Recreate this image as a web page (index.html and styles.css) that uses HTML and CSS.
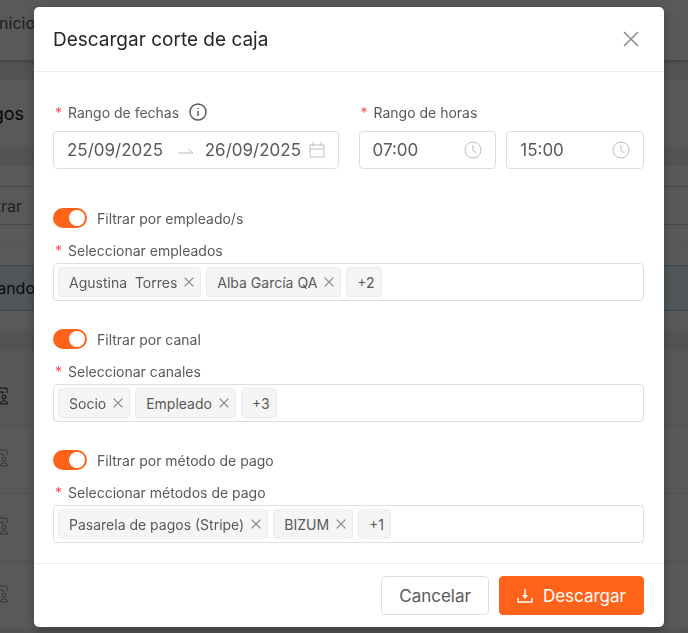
FILE: index.html
```html
<!DOCTYPE html>
<html lang="es">
<head>
  <meta charset="UTF-8">
  <meta name="viewport" content="width=device-width, initial-scale=1.0">
  <title>Descargar corte de caja</title>
  <link rel="stylesheet" href="styles.css">
</head>
<body>
  <svg class="sprite" aria-hidden="true">
    <symbol id="icon-x" viewBox="0 0 16 16"><path d="M1 1l14 14M15 1L1 15"/></symbol>
    <symbol id="icon-clock" viewBox="0 0 18 18"><circle cx="9" cy="9" r="8"/><path d="M9 4v5.500l3.500 2.500"/></symbol>
    <symbol id="icon-user" viewBox="0 0 18 18"><path d="M7 17H1V1h15v5M5 5h7v2"/><circle cx="13" cy="10" r="2"/><path d="M9.500 17v-1.500l2-1.500h3l2 1.500V17z"/></symbol>
  </svg>

  <div class="page" aria-hidden="true">
    <div class="nav"><span class="peek">nicio</span></div>
    <div class="page-title"><span class="peek">gos</span></div>
    <div class="panel">
      <div class="panel-top"></div>
      <div class="panel-filter"><span class="peek">trar</span></div>
      <div class="panel-space"></div>
      <div class="panel-space"></div>
      <div class="notice"><span class="peek">ando</span></div>
      <div class="panel-space"></div>
    </div>
    <div class="rows">
      <div class="row row-head"><svg class="row-icon"><use href="#icon-user"/></svg></div>
      <div class="row"><svg class="row-icon"><use href="#icon-user"/></svg></div>
      <div class="row"><svg class="row-icon"><use href="#icon-user"/></svg></div>
      <div class="row"><svg class="row-icon"><use href="#icon-user"/></svg></div>
    </div>
  </div>

  <div class="overlay">
    <form class="modal" role="dialog" aria-labelledby="titulo">
      <div class="modal-header">
        <h1 id="titulo">Descargar corte de caja</h1>
        <button type="button" class="close" aria-label="Cerrar"><svg class="icon"><use href="#icon-x"/></svg></button>
      </div>

      <div class="modal-body">
        <div class="ranges">
          <div class="field">
            <div class="label-row">
              <label class="label" for="fechaInicio">Rango de fechas</label>
              <svg class="info" viewBox="0 0 18 18"><circle cx="9" cy="9" r="8"/><path d="M9 8v5M9 5v1"/></svg>
            </div>
            <div class="box">
              <input type="text" id="fechaInicio" class="date" value="25/09/2025">
              <svg class="arrow" viewBox="0 0 16 10"><path d="M0 8h15l-5-4"/></svg>
              <input type="text" class="date" value="26/09/2025" aria-label="Fecha de fin">
              <svg class="calendar" viewBox="0 0 16 16"><path d="M1 3h14v12H1zM1 7h14M4 0v4M12 0v4"/></svg>
            </div>
          </div>
          <div class="field">
            <div class="label-row">
              <label class="label" for="horaInicio">Rango de horas</label>
            </div>
            <div class="times">
              <div class="box">
                <input type="text" id="horaInicio" value="07:00">
                <svg class="clock"><use href="#icon-clock"/></svg>
              </div>
              <div class="box">
                <input type="text" value="15:00" aria-label="Hora de fin">
                <svg class="clock"><use href="#icon-clock"/></svg>
              </div>
            </div>
          </div>
        </div>

        <div class="filter">
          <div class="switch-row">
            <input type="checkbox" role="switch" id="porEmpleado" class="switch" checked>
            <label for="porEmpleado">Filtrar por empleado/s</label>
          </div>
          <label class="label" for="empleados">Seleccionar empleados</label>
          <div class="select">
            <span class="tag">Agustina&nbsp; Torres<button type="button" aria-label="Quitar Agustina Torres"><svg class="icon"><use href="#icon-x"/></svg></button></span>
            <span class="tag">Alba García QA<button type="button" aria-label="Quitar Alba García QA"><svg class="icon"><use href="#icon-x"/></svg></button></span>
            <span class="tag">+2</span>
            <input type="text" id="empleados">
          </div>
        </div>

        <div class="filter">
          <div class="switch-row">
            <input type="checkbox" role="switch" id="porCanal" class="switch" checked>
            <label for="porCanal">Filtrar por canal</label>
          </div>
          <label class="label" for="canales">Seleccionar canales</label>
          <div class="select">
            <span class="tag">Socio<button type="button" aria-label="Quitar Socio"><svg class="icon"><use href="#icon-x"/></svg></button></span>
            <span class="tag">Empleado<button type="button" aria-label="Quitar Empleado"><svg class="icon"><use href="#icon-x"/></svg></button></span>
            <span class="tag">+3</span>
            <input type="text" id="canales">
          </div>
        </div>

        <div class="filter">
          <div class="switch-row">
            <input type="checkbox" role="switch" id="porMetodo" class="switch" checked>
            <label for="porMetodo">Filtrar por método de pago</label>
          </div>
          <label class="label" for="metodos">Seleccionar métodos de pago</label>
          <div class="select">
            <span class="tag">Pasarela de pagos (Stripe)<button type="button" aria-label="Quitar Pasarela de pagos"><svg class="icon"><use href="#icon-x"/></svg></button></span>
            <span class="tag">BIZUM<button type="button" aria-label="Quitar BIZUM"><svg class="icon"><use href="#icon-x"/></svg></button></span>
            <span class="tag">+1</span>
            <input type="text" id="metodos">
          </div>
        </div>
      </div>

      <div class="modal-footer">
        <button type="button" class="btn">Cancelar</button>
        <button type="submit" class="btn btn-primary">
          <svg class="download" viewBox="0 0 16 16"><path d="M1 10v4h14v-4M8 1v7"/><path class="head" d="M5 7h6l-3 4z"/></svg>
          Descargar
        </button>
      </div>
    </form>
  </div>
</body>
</html>
```

FILE: styles.css
```css
* {
  box-sizing: border-box;
}

body {
  margin: 0;
  font-family: Inter, Roboto, sans-serif;
  font-size: 14px;
  color: #595959;
}

.sprite {
  display: none;
}

svg {
  fill: none;
  stroke: currentColor;
  flex: none;
}

/* Página de fondo */
.page {
  position: fixed;
  inset: 0;
  overflow: hidden;
  background: #eee;
}

.page > div {
  background: #fff;
}

.nav,
.page-title,
.panel-filter,
.notice {
  display: flex;
  align-items: center;
}

.peek {
  display: flex;
  justify-content: flex-end;
  width: 35px;
  font-size: 16px;
}

.page > .nav {
  height: 61px;
  padding-bottom: 14px;
  border-bottom: 1px solid #ccc;
  box-shadow: 0 1px 3px #bbb;
  margin-bottom: 19px;
}

.page-title {
  height: 67px;
  margin-bottom: 19px;
  color: #111;
}

.page-title .peek {
  width: 24px;
  font-size: 18px;
}

.panel {
  margin-bottom: 19px;
}

.panel-top,
.panel-space {
  height: 20px;
}

.panel-filter {
  height: 39px;
  border-top: 1px solid #ccc;
  border-bottom: 1px solid #ccc;
}

.panel-filter .peek {
  width: 22px;
}

.panel-space + .panel-space {
  border-top: 1px solid #eee;
}

.notice {
  height: 46px;
  background: #e6f7ff;
  border-top: 1px solid #91d5ff;
  border-bottom: 1px solid #91d5ff;
  color: #222;
}

.row {
  display: flex;
  align-items: center;
  height: 68px;
  padding-bottom: 4px;
  border-bottom: 1px solid #e4e4e4;
  color: #999;
}

.row-head {
  height: 76px;
  padding: 16px 0 0;
  background: #fafafa;
  color: #222;
}

.row-icon {
  width: 18px;
  height: 18px;
  margin-left: -9px;
}

/* Modal */
.overlay {
  position: relative;
  min-height: 100vh;
  padding: 7px 24px 7px 34px;
  background: rgba(0, 0, 0, 0.65);
}

.modal {
  background: #fff;
  border-radius: 5px;
  box-shadow: 0 4px 12px rgba(0, 0, 0, 0.3);
}

.modal-header {
  display: flex;
  justify-content: space-between;
  align-items: center;
  height: 65px;
  padding: 0 25px 0 19px;
  border-bottom: 1px solid #ececec;
}

h1 {
  margin: 0;
  font-size: 19px;
  font-weight: 400;
  color: #262626;
}

button {
  font-family: inherit;
  cursor: pointer;
}

.close,
.tag button {
  display: flex;
  padding: 0;
  border: none;
  background: none;
  color: #888;
}

.close .icon {
  width: 16px;
  height: 16px;
  stroke-width: 1.5;
}

.modal-body {
  display: flex;
  flex-direction: column;
  gap: 28px;
  padding: 27px 20px 20px 19px;
}

.ranges {
  display: grid;
  grid-template-columns: 1fr 1fr;
  gap: 20px;
  margin-bottom: 11px;
}

.label-row {
  display: flex;
  align-items: center;
  gap: 10px;
  height: 26px;
  margin-bottom: 6px;
}

.label {
  display: block;
  line-height: 25px;
}

.label::before {
  content: "*";
  display: inline-block;
  width: 13px;
  padding-left: 2px;
  color: #ff4d4f;
}

.info,
.clock {
  width: 18px;
  height: 18px;
}

.info {
  stroke-width: 1.5;
}

.times {
  display: grid;
  grid-template-columns: 1fr 1fr;
  gap: 10px;
}

.box,
.select {
  display: flex;
  align-items: center;
  height: 38px;
  border: 1px solid #dedede;
  border-radius: 4px;
}

.box {
  padding: 0 13px;
}

.box input,
.select input {
  flex: 1;
  min-width: 0;
  width: 100%;
  padding: 0;
  border: none;
  outline: none;
  background: none;
  font-family: inherit;
  font-size: 17px;
  color: #595959;
}

.arrow,
.calendar,
.clock {
  color: #bfbfbf;
}

.arrow {
  width: 16px;
  height: 10px;
  margin: 0 11px;
}

.calendar {
  width: 16px;
  height: 16px;
  margin-left: 4px;
}

.switch-row {
  display: flex;
  align-items: center;
  gap: 10px;
  height: 20px;
  margin-bottom: 10px;
}

.switch {
  appearance: none;
  width: 34px;
  height: 20px;
  margin: 0;
  padding: 2px;
  border-radius: 10px;
  background: #d9d9d9;
  cursor: pointer;
}

.switch::before {
  content: "";
  display: block;
  width: 16px;
  height: 16px;
  border-radius: 50%;
  background: #fff;
}

.switch:checked {
  background: #ff6319;
}

.switch:checked::before {
  margin-left: auto;
}

.select {
  gap: 5px;
  padding: 0 4px;
}

.tag {
  display: flex;
  align-items: center;
  gap: 7px;
  height: 30px;
  padding: 0 6px 0 10px;
  border: 1px solid #ececec;
  border-radius: 4px;
  background: #f5f5f5;
  white-space: nowrap;
}

.tag .icon {
  width: 10px;
  height: 10px;
  stroke-width: 2;
}

.modal-footer {
  display: flex;
  justify-content: flex-end;
  gap: 10px;
  padding: 12px 20px 12px 19px;
  border-top: 1px solid #ececec;
}

.btn {
  display: flex;
  align-items: center;
  gap: 10px;
  height: 39px;
  padding: 0 17px;
  border: 1px solid #dedede;
  border-radius: 4px;
  background: #fff;
  font-size: 17px;
  color: #595959;
}

.btn-primary {
  border-color: #ff6319;
  background: #ff6319;
  color: #fff;
}

.download {
  width: 16px;
  height: 16px;
  stroke-width: 1.5;
}

.download .head {
  fill: currentColor;
  stroke: none;
}
```
